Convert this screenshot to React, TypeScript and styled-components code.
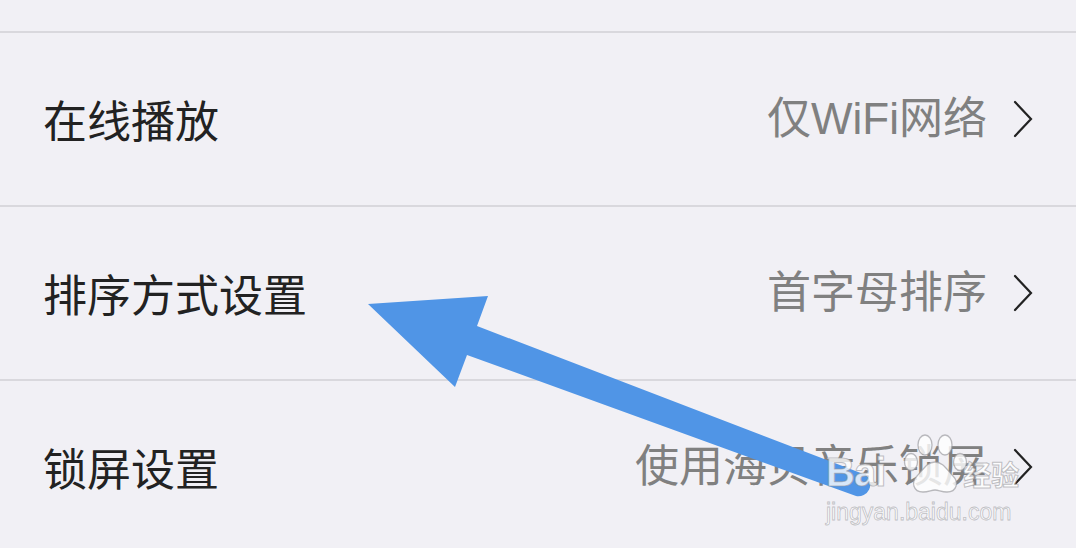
import React from "react";
import styled, { createGlobalStyle } from "styled-components";

const GlobalStyle = createGlobalStyle`
  html, body {
    margin: 0;
    padding: 0;
    background: #f1f0f5;
    overflow: hidden;
  }
  body {
    font-family: "Noto Sans CJK SC", "Noto Sans", sans-serif;
  }
`;

const Page = styled.div`
  position: relative;
  width: 1076px;
  height: 548px;
  overflow: hidden;
  background: #f1f0f5;
`;

const TopStub = styled.div`
  height: 31px;
`;

const List = styled.div`
  display: flex;
  flex-direction: column;
`;

const Row = styled.div`
  box-sizing: border-box;
  height: 174px;
  border-top: 2px solid #d9d8dd;
  display: flex;
  align-items: center;
  padding: 0 43px 0 43px;
`;

const Label = styled.span`
  flex: 1;
  font-family: "Noto Sans CJK SC", "Noto Sans", sans-serif;
  font-size: 44px;
  line-height: 1;
  color: #222222;
`;

const Value = styled.span`
  font-family: "Liberation Sans", "Noto Sans CJK SC", sans-serif;
  font-size: 44px;
  line-height: 1;
  color: #808080;
`;

const ChevronWrap = styled.span`
  display: flex;
  margin-left: 26px;
`;

const Overlay = styled.svg`
  position: absolute;
  left: 0;
  top: 0;
  pointer-events: none;
`;

const Watermark = styled.div`
  position: absolute;
  left: 826px;
  top: 430px;
  display: flex;
  flex-direction: column;
  pointer-events: none;
`;

const WmTop = styled.div`
  display: flex;
  align-items: flex-end;
  height: 64px;
`;

const WmBai = styled.span`
  font-family: "Liberation Sans", Arial, sans-serif;
  font-weight: 700;
  font-size: 40px;
  letter-spacing: -1px;
  line-height: 1;
  color: rgba(255, 255, 255, 0.78);
  -webkit-text-stroke: 1px rgba(150, 150, 155, 0.6);
  margin-bottom: 2px;
`;

const WmJy = styled.span`
  font-family: "Noto Sans CJK SC", sans-serif;
  font-weight: 700;
  font-size: 28px;
  line-height: 1;
  color: rgba(255, 255, 255, 0.82);
  -webkit-text-stroke: 1px rgba(150, 150, 155, 0.6);
  margin-left: -6px;
  margin-bottom: 6px;
`;

const WmUrl = styled.span`
  font-family: "Liberation Sans", Arial, sans-serif;
  font-size: 23px;
  line-height: 1;
  margin-top: 7px;
  color: rgba(255, 255, 255, 0.85);
  -webkit-text-stroke: 0.8px rgba(160, 160, 165, 0.65);
`;

const Chevron = () => (
  <svg width="20" height="38" viewBox="0 0 20 38">
    <polyline
      points="2,2 18,19 2,36"
      fill="none"
      stroke="#222"
      strokeWidth="2.2"
      strokeLinecap="round"
      strokeLinejoin="miter"
    />
  </svg>
);

const Paw = () => (
  <svg width="66" height="62" viewBox="0 0 66 62" style={{ marginLeft: 18 }}>
    <g fill="rgba(255,255,255,0.8)" stroke="rgba(150,150,155,0.65)" strokeWidth="1.3">
      <ellipse cx="22" cy="13" rx="7" ry="10" />
      <ellipse cx="42" cy="13" rx="7" ry="10" />
      <ellipse cx="8" cy="30" rx="6.5" ry="8.5" />
      <ellipse cx="57" cy="30" rx="6.5" ry="8.5" />
      <path d="M32 30 C24 30 20 38 14 44 C8 50 10 60 20 60 C26 60 28 58 32 58 C36 58 38 60 44 60 C54 60 56 50 50 44 C44 38 40 30 32 30 Z" />
    </g>
  </svg>
);

const rows = [
  { label: "在线播放", value: "仅WiFi网络" },
  { label: "排序方式设置", value: "首字母排序" },
  { label: "锁屏设置", value: "使用海贝音乐锁屏" },
];

export default function App() {
  return (
    <Page>
      <GlobalStyle />
      <TopStub />
      <List>
        {rows.map((r) => (
          <Row key={r.label}>
            <Label>{r.label}</Label>
            <Value>{r.value}</Value>
            <ChevronWrap>
              <Chevron />
            </ChevronWrap>
          </Row>
        ))}
      </List>
      <Overlay width="1076" height="548" viewBox="0 0 1076 548">
        <path
          d="M368 304 L488 296 L477 326 L866 475 A12 12 0 0 1 856 496 L467 355 L455 387 Z"
          fill="#5095e6"
        />
      </Overlay>
      <Watermark>
        <WmTop>
          <WmBai>Bai</WmBai>
          <Paw />
          <WmJy>经验</WmJy>
        </WmTop>
        <WmUrl>jingyan.baidu.com</WmUrl>
      </Watermark>
    </Page>
  );
}
